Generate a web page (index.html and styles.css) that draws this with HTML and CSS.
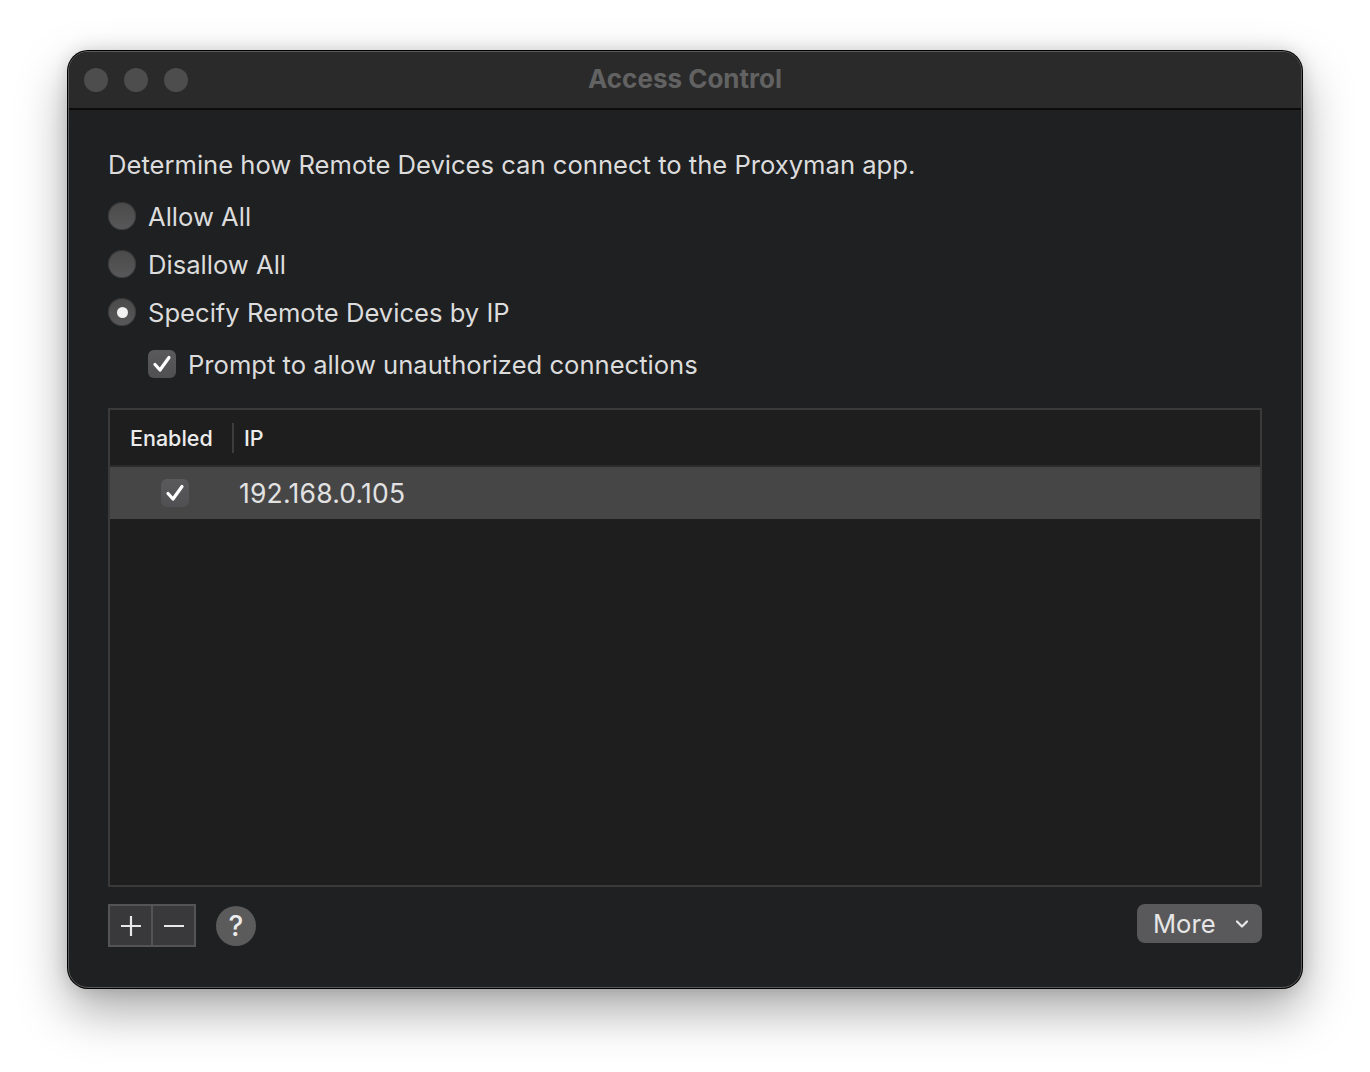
FILE: index.html
```html
<!DOCTYPE html>
<html>
<head>
<meta charset="utf-8">
<link rel="stylesheet" href="styles.css">
</head>
<body>
<div class="window">
  <div class="titlebar">
    <div class="lights"><span class="light"></span><span class="light"></span><span class="light"></span></div>
    <div class="title">Access Control</div>
  </div>
  <div class="content">
    <p class="intro">Determine how Remote Devices can connect to the Proxyman app.</p>
    <div class="option"><span class="radio"></span><span>Allow All</span></div>
    <div class="option"><span class="radio"></span><span>Disallow All</span></div>
    <div class="option"><span class="radio selected"></span><span>Specify Remote Devices by IP</span></div>
    <div class="option sub"><span class="check"><svg viewBox="0 0 28 28" width="28" height="28"><path d="M7 14.5 L12 20 L21 7.5" fill="none" stroke="#fff" stroke-width="3.2" stroke-linecap="round" stroke-linejoin="round"/></svg></span><span>Prompt to allow unauthorized connections</span></div>
    <div class="table">
      <div class="thead">
        <div class="th col-enabled">Enabled</div>
        <div class="th col-ip">IP</div>
      </div>
      <div class="row selected">
        <div class="td col-enabled"><span class="check"><svg viewBox="0 0 28 28" width="28" height="28"><path d="M7 14.5 L12 20 L21 7.5" fill="none" stroke="#fff" stroke-width="3.2" stroke-linecap="round" stroke-linejoin="round"/></svg></span></div>
        <div class="td col-ip">192.168.0.105</div>
      </div>
    </div>
    <div class="footer">
      <div class="segment">
        <button class="seg-btn"><svg viewBox="0 0 24 24" width="24" height="24"><path d="M12 2V22M2 12H22" stroke="#e8e8e8" stroke-width="2.2"/></svg></button>
        <button class="seg-btn"><svg viewBox="0 0 24 24" width="24" height="24"><path d="M2 12H22" stroke="#e8e8e8" stroke-width="2.2"/></svg></button>
      </div>
      <div class="help">?</div>
      <div class="spacer"></div>
      <div class="more"><span>More</span><svg viewBox="0 0 14 10" width="14" height="10"><path d="M2 2.5L7 7.5L12 2.5" fill="none" stroke="#e8e8e8" stroke-width="2.2" stroke-linecap="round" stroke-linejoin="round"/></svg></div>
    </div>
  </div>
</div>
</body>
</html>
```
FILE: styles.css
```css
html, body {
  margin: 0;
  padding: 0;
  background: #ffffff;
  width: 1370px;
  height: 1072px;
  overflow: hidden;
}
body {
  font-family: Inter, "Liberation Sans", sans-serif;
  padding-top: 51px;
  box-sizing: border-box;
}
.window {
  margin-left: 68px;
  width: 1234px;
  height: 937px;
  box-sizing: border-box;
  border-radius: 20px;
  background: #1f2022;
  border: 1.5px solid #5a5a5a;
  box-shadow: 0 0 0 1px #000, 0 22px 50px rgba(0,0,0,0.35), 0 0 18px rgba(0,0,0,0.15);
  overflow: hidden;
  display: flex;
  flex-direction: column;
  color: #dedede;
}
.titlebar {
  height: 56px;
  flex: none;
  background: #2a2a2a;
  border-bottom: 2px solid #0c0c0c;
  position: relative;
  display: flex;
  align-items: center;
}
.lights {
  display: flex;
  gap: 16px;
  padding-left: 15px;
}
.light {
  width: 24px;
  height: 24px;
  border-radius: 50%;
  background: #4d4d4d;
}
.title {
  position: absolute;
  left: 0;
  right: 0;
  text-align: center;
  font-size: 26px;
  font-weight: 700;
  color: #626262;
  top: 11px;
}
.content {
  padding: 40px 39px 0 39px;
  display: flex;
  flex-direction: column;
}
.intro {
  margin: 0 0 12px 0;
  font-size: 25.6px;
  line-height: 30px;
  color: #dcdcdc;
}
.option {
  height: 48px;
  display: flex;
  align-items: center;
  gap: 12px;
  font-size: 25.6px;
  color: #dcdcdc;
}
.option.sub {
  margin-top: 4px;
  padding-left: 40px;
}
.radio {
  width: 28px;
  height: 28px;
  border-radius: 50%;
  background: linear-gradient(#4a4a4b, #58585a);
  box-shadow: inset 0 0 0 1px rgba(0,0,0,0.25);
  display: flex;
  align-items: center;
  justify-content: center;
}
.radio.selected::after {
  content: "";
  width: 11px;
  height: 11px;
  border-radius: 50%;
  background: #f2f2f2;
}
.check {
  width: 28px;
  height: 28px;
  border-radius: 6px;
  background: linear-gradient(#5a5a5c, #505052);
  display: flex;
  align-items: center;
  justify-content: center;
}
.check svg { display: block; }
.table {
  margin-top: 20px;
  height: 479px;
  box-sizing: border-box;
  border: 2px solid #3a3a3b;
  background: #1e1e1f;
}
.thead {
  height: 55px;
  display: flex;
  align-items: center;
  border-bottom: 2px solid #2c2c2d;
  font-size: 21.5px;
  font-weight: 500;
  color: #ececec;
}
.th.col-enabled {
  width: 124px;
  box-sizing: border-box;
  padding-left: 20px;
  border-right: 2px solid #3d3d3e;
  height: 30px;
  line-height: 30px;
}
.th.col-ip {
  padding-left: 10px;
}
.row {
  height: 52px;
  display: flex;
  align-items: center;
}
.row.selected {
  background: #464647;
}
.td.col-enabled {
  width: 128px;
  display: flex;
  justify-content: center;
  padding-left: 1px;
}
.td.col-ip {
  font-size: 26.5px;
  letter-spacing: 0.2px;
  color: #e2e2e2;
}
.footer {
  margin-top: 17px;
  display: flex;
  align-items: center;
}
.segment {
  display: flex;
  border: 2px solid #545456;
  background: #545456;
  gap: 2px;
}
.seg-btn {
  width: 41px;
  height: 39px;
  border: none;
  padding: 0;
  margin: 0;
  background: #39393b;
  display: flex;
  align-items: center;
  justify-content: center;
}
.seg-btn svg { display: block; }
.help {
  margin-left: 20px;
  width: 40px;
  height: 40px;
  border-radius: 50%;
  background: #5b5b5c;
  color: #ececec;
  font-size: 28px;
  font-weight: 500;
  display: flex;
  align-items: center;
  justify-content: center;
}
.spacer { flex: 1; }
.more {
  width: 125px;
  height: 39px;
  margin-top: -4px;
  box-sizing: border-box;
  border-radius: 8px;
  background: #59595b;
  display: flex;
  align-items: center;
  padding: 0 13px 0 16px;
  justify-content: space-between;
  font-size: 25.6px;
  color: #e6e6e6;
}
.more svg { display: block; }
```
